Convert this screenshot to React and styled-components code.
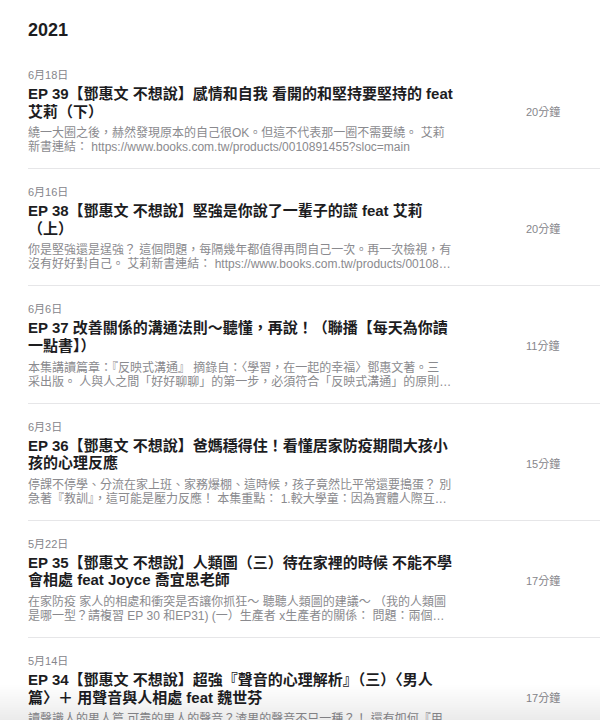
// vendor
import React from 'react';
import styled, { createGlobalStyle } from 'styled-components';

// +++++++++ DATA +++++++++

const episodes = [
	{
		date: '6月18日',
		title: 'EP 39【鄧惠文 不想說】感情和自我 看開的和堅持要堅持的 feat 艾莉（下）',
		desc: '繞一大圈之後，赫然發現原本的自己很OK。但這不代表那一圈不需要繞。 艾莉新書連結： https://www.books.com.tw/products/0010891455?sloc=main',
		duration: '20分鐘',
	},
	{
		date: '6月16日',
		title: 'EP 38【鄧惠文 不想說】堅強是你說了一輩子的謊 feat 艾莉（上）',
		desc: '你是堅強還是逞強？ 這個問題，每隔幾年都值得再問自己一次。再一次檢視，有沒有好好對自己。 艾莉新書連結： https://www.books.com.tw/products/0010891455?sloc=main',
		duration: '20分鐘',
	},
	{
		date: '6月6日',
		title: 'EP 37 改善關係的溝通法則～聽懂，再說！（聯播【每天為你讀一點書】）',
		desc: '本集講讀篇章：『反映式溝通』 摘錄自：〈學習，在一起的幸福〉鄧惠文著。三采\u2060出版。 人與人之間「好好聊聊」的第一步，必須符合「反映式溝通」的原則，讓對方感覺被理解。',
		duration: '11分鐘',
	},
	{
		date: '6月3日',
		title: 'EP 36【鄧惠文 不想說】爸媽穩得住！看懂居家防疫期間大孩小孩的心理反應',
		desc: '停課不停學、分流在家上班、家務爆棚、這時候，孩子竟然比平常還要搗蛋？ 別急著『教訓』，這可能是壓力反應！ 本集重點： 1.較大學童：因為實體人際互動減少，情緒起伏變大。',
		duration: '15分鐘',
	},
	{
		date: '5月22日',
		title: 'EP 35【鄧惠文 不想說】人類圖（三）待在家裡的時候 不能不學會相處 feat Joyce 喬宜思老師',
		desc: '在家防疫 家人的相處和衝突是否讓你抓狂～ 聽聽人類圖的建議～ （我的人類圖是哪一型？請複習 EP 30 和EP31) (一）生產者 x生產者的關係： 問題：兩個都是停不下來的人。',
		duration: '17分鐘',
	},
	{
		date: '5月14日',
		title: 'EP 34【鄧惠文 不想說】超強『聲音的心理解析』（三）〈男人篇〉＋ 用聲音與人相處 feat 魏世芬',
		desc: '讀聲識人的男人篇 可靠的男人的聲音？渣男的聲音不只一種？！ 還有如何『用聲音與人相處』，讓關係更好。',
		duration: '17分鐘',
	},
];

// +++++++++ CSS +++++++++

const GlobalStyle = createGlobalStyle`
	html, body {
		margin: 0;
		background: #ffffff;
	}

	body {
		font-family: "Liberation Sans", "Noto Sans CJK TC", sans-serif;
		-webkit-font-smoothing: antialiased;
	}
`;

const Page = styled.main`
	padding: 19px 0 0 28px;
`;

const Year = styled.h2`
	margin: 0 0 11px;
	font-size: 18px;
	line-height: 22px;
	font-weight: 700;
	color: #1d1d1f;
`;

const List = styled.ul`
	margin: 0;
	padding: 0;
	list-style: none;
`;

const Row = styled.li`
	display: grid;
	grid-template-columns: 430px 1fr;
	align-items: center;
	padding: 16px 0 14px;
	border-bottom: 1px solid #e6e6e8;
`;

const Info = styled.div`
	display: flex;
	flex-direction: column;
	min-width: 0;
`;

const DateLabel = styled.span`
	font-size: 11px;
	line-height: 14px;
	color: #86868b;
`;

const Title = styled.h3`
	margin: 3px 0 0;
	padding-right: 4px;
	font-size: 15px;
	line-height: 17.6px;
	font-weight: 700;
	color: #1d1d1f;
`;

const Desc = styled.p`
	margin: 6px 0 0;
	padding-right: 6.5px;
	font-size: 12px;
	line-height: 14px;
	color: #8a8a8e;
	word-break: break-all;
	display: -webkit-box;
	-webkit-line-clamp: 2;
	-webkit-box-orient: vertical;
	overflow: hidden;
`;

const Duration = styled.span`
	padding-left: 68px;
	font-size: 11px;
	color: #86868b;
	white-space: nowrap;
`;

const BottomFade = styled.div`
	position: fixed;
	left: 0;
	right: 0;
	bottom: 0;
	height: 36px;
	pointer-events: none;
	background: linear-gradient(to bottom, rgba(0, 0, 0, 0), rgba(0, 0, 0, 0.08));
`;

const Episode = ({ date, title, desc, duration }) => (
	<Row>
		<Info>
			<DateLabel>{date}</DateLabel>
			<Title>{title}</Title>
			<Desc>{desc}</Desc>
		</Info>
		<Duration>{duration}</Duration>
	</Row>
);

export default function App() {
	return (
		<>
			<GlobalStyle />
			<Page>
				<Year>2021</Year>
				<List>
					{episodes.map(ep => (
						<Episode key={ep.title} {...ep} />
					))}
				</List>
			</Page>
			<BottomFade />
		</>
	);
}
